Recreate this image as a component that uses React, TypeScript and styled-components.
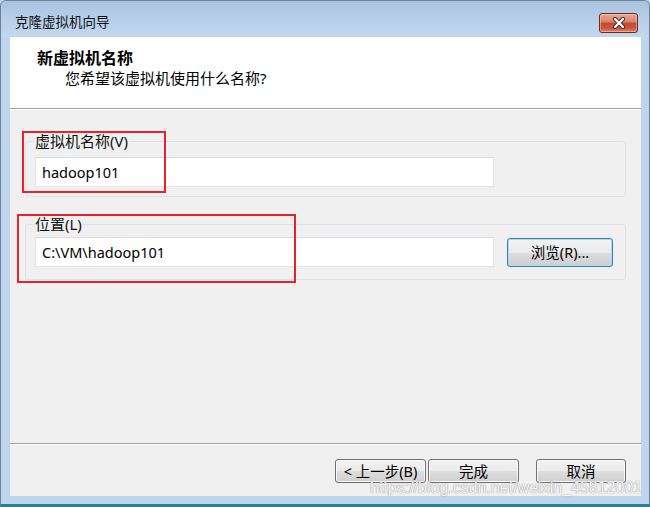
import React from 'react'
import styled, { createGlobalStyle } from 'styled-components'

const GlobalStyle = createGlobalStyle`
  html, body {
    margin: 0;
    padding: 0;
    background: #bdd4ec;
  }
  body {
    font-family: "Noto Sans", "Noto Sans CJK SC", sans-serif;
  }
`

const Window = styled.div`
  position: relative;
  width: 650px;
  height: 507px;
  box-sizing: border-box;
  display: flex;
  flex-direction: column;
  background: #bed5ed;
  border: 1px solid #6f8295;
  border-bottom: 3px solid #2a7f93;
  border-radius: 6px 6px 0 0;
  overflow: hidden;
`

const TitleBar = styled.div`
  height: 36px;
  flex: none;
  display: flex;
  align-items: center;
  justify-content: space-between;
  padding: 0 11px 0 14px;
  background: linear-gradient(to bottom, #a9c2de 0%, #b9d0ea 55%, #c2d8ef 100%);
`

const Title = styled.span`
  font-size: 13.5px;
  color: #111;
  margin-top: 4px;
`

const CloseButton = styled.button`
  width: 39px;
  height: 20px;
  margin-top: 8px;
  padding: 0;
  display: flex;
  align-items: center;
  justify-content: center;
  border: 1px solid #6b2a22;
  border-radius: 3px;
  background: linear-gradient(to bottom, #e8a897 0%, #d98169 45%, #c4482c 50%, #cc5a3c 80%, #e08a6c 100%);
  box-shadow: inset 0 0 0 1px rgba(255, 220, 210, 0.45);
`

const Frame = styled.div`
  flex: 1;
  display: flex;
  padding: 0 8px 8px 9px;
`

const Client = styled.div`
  flex: 1;
  display: flex;
  flex-direction: column;
  background: #f0f0f0;
`

const Header = styled.div`
  height: 72px;
  flex: none;
  box-sizing: border-box;
  padding: 11px 0 0 27px;
  background: #fff;
  border-bottom: 1px solid #a0a0a0;
  box-shadow: 0 1px 0 #fff;
`

const HeaderTitle = styled.div`
  font-size: 16px;
  font-weight: bold;
  line-height: 20px;
  color: #000;
`

const HeaderSub = styled.div`
  font-size: 15px;
  line-height: 20px;
  padding-left: 28px;
  color: #000;
`

const Content = styled.div`
  flex: 1;
  display: flex;
  flex-direction: column;
  gap: 18px;
  padding: 23px 15px 0 15px;
`

const Group = styled.fieldset<{ $top: number; $bottom: number }>`
  margin: 0;
  padding: ${p => p.$top}px 11px ${p => p.$bottom}px 9px;
  border: 1px solid #d9e0e6;
  border-radius: 4px;
  display: flex;
  align-items: center;
  gap: 13px;
`

const Legend = styled.legend`
  padding: 0 1px 0 0;
  font-size: 15px;
  line-height: 18px;
  color: #111;
`

const TextBox = styled.input`
  width: 459px;
  height: 30px;
  box-sizing: border-box;
  margin: 0;
  padding: 0 6px;
  border: 1px solid #e2e7ec;
  border-top-color: #d6dce2;
  background: #fff;
  font-family: "Noto Sans", "Noto Sans CJK SC", sans-serif;
  font-size: 14.5px;
  color: #000;
  outline: none;
`

const Button = styled.button<{ $width: number; $focused?: boolean }>`
  width: ${p => p.$width}px;
  height: ${p => (p.$focused ? 29 : 24)}px;
  box-sizing: border-box;
  padding: 0;
  border: 1px solid ${p => (p.$focused ? '#3c7fb1' : '#707070')};
  border-radius: 3px;
  background: linear-gradient(to bottom, #f2f2f2 0%, #ebebeb 50%, #dddddd 51%, #cfcfcf 100%);
  box-shadow: inset 0 0 0 1px ${p => (p.$focused ? '#a8dcf3' : 'rgba(255,255,255,0.8)')};
  font-family: "Noto Sans", "Noto Sans CJK SC", sans-serif;
  font-size: 14.5px;
  line-height: 1;
  color: #000;
`

const Footer = styled.div`
  flex: none;
  display: flex;
  justify-content: flex-end;
  align-items: center;
  padding: 15px 15px 13px 0;
  border-top: 1px solid #a0a0a0;
  box-shadow: inset 0 1px 0 #fff;
`

const ButtonPair = styled.div`
  display: flex;
  gap: 2px;
  margin-right: 17px;
`

const Annotation = styled.div<{ $x: number; $y: number; $w: number; $h: number }>`
  position: absolute;
  left: ${p => p.$x}px;
  top: ${p => p.$y}px;
  width: ${p => p.$w}px;
  height: ${p => p.$h}px;
  box-sizing: border-box;
  border: 2px solid #e8212c;
  pointer-events: none;
`

const Watermark = styled.div`
  position: absolute;
  left: 369px;
  top: 478px;
  font-family: "Liberation Sans", Arial, sans-serif;
  font-size: 16px;
  color: rgba(255, 255, 255, 0.9);
  text-shadow: 0 0 1px #9c9c9c, 0 0 1px #9c9c9c;
  white-space: nowrap;
  pointer-events: none;
`

const CloseIcon = () => (
  <svg width="14" height="12" viewBox="0 0 14 12">
    <path d="M3 2 L11 10 M11 2 L3 10" stroke="#4a2a26" strokeWidth="4.2" strokeLinecap="round" />
    <path d="M3 2 L11 10 M11 2 L3 10" stroke="#fff" strokeWidth="2.4" strokeLinecap="round" />
  </svg>
)

export default function App() {
  return (
    <>
      <GlobalStyle />
      <Window>
        <TitleBar>
          <Title>克隆虚拟机向导</Title>
          <CloseButton aria-label="关闭">
            <CloseIcon />
          </CloseButton>
        </TitleBar>
        <Frame>
          <Client>
            <Header>
              <HeaderTitle>新虚拟机名称</HeaderTitle>
              <HeaderSub>您希望该虚拟机使用什么名称?</HeaderSub>
            </Header>
            <Content>
              <Group $top={7} $bottom={9}>
                <Legend>虚拟机名称(V)</Legend>
                <TextBox defaultValue="hadoop101" />
              </Group>
              <Group $top={4} $bottom={12}>
                <Legend>位置(L)</Legend>
                <TextBox defaultValue="C:\VM\hadoop101" />
                <Button $width={106} $focused>浏览(R)...</Button>
              </Group>
            </Content>
            <Footer>
              <ButtonPair>
                <Button $width={91}>&lt; 上一步(B)</Button>
                <Button $width={91}>完成</Button>
              </ButtonPair>
              <Button $width={90}>取消</Button>
            </Footer>
          </Client>
        </Frame>
        <Annotation $x={21} $y={130} $w={144} $h={62} />
        <Annotation $x={16} $y={213} $w={279} $h={69} />
        <Watermark>https://blog.csdn.net/weixin_45812001</Watermark>
      </Window>
    </>
  )
}
